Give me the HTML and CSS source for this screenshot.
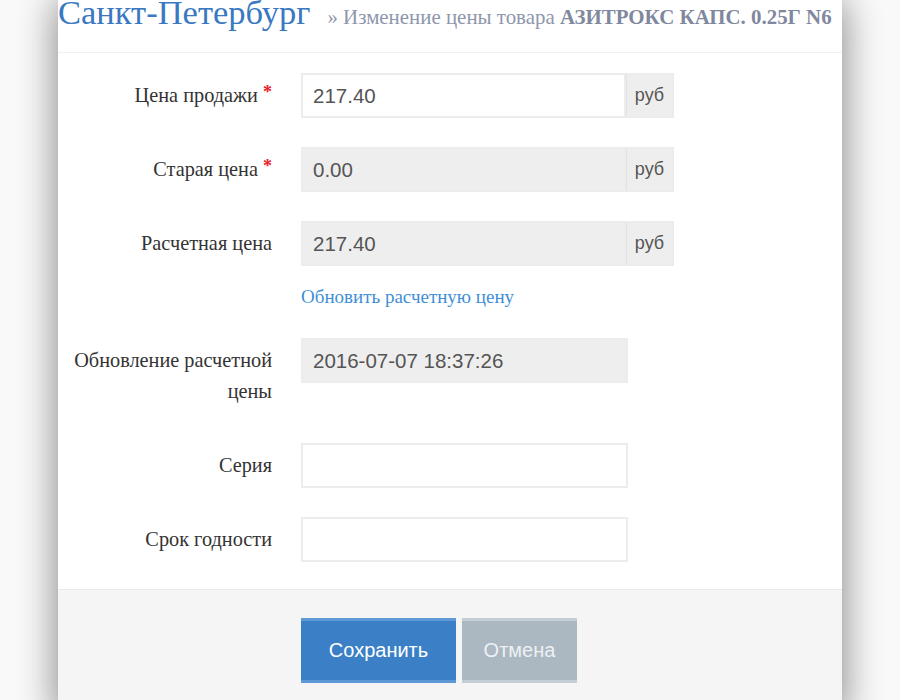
FILE: index.html
```html
<!DOCTYPE html>
<html lang="ru">
<head>
<meta charset="utf-8">
<title>Изменение цены товара</title>
<link rel="stylesheet" href="styles.css">
</head>
<body>
<div class="modal">
  <div class="modal-header">
    <h1 class="title">Санкт-Петербург</h1>
    <span class="subtitle">» Изменение цены товара <b>АЗИТРОКС КАПС. 0.25Г N6</b></span>
  </div>
  <form class="modal-body">
    <div class="row">
      <label class="label">Цена продажи <span class="req">*</span></label>
      <div class="group">
        <div class="input">217.40</div>
        <div class="addon">руб</div>
      </div>
    </div>
    <div class="row">
      <label class="label">Старая цена <span class="req">*</span></label>
      <div class="group">
        <div class="input disabled">0.00</div>
        <div class="addon">руб</div>
      </div>
    </div>
    <div class="row row-link">
      <label class="label">Расчетная цена</label>
      <div class="field">
        <div class="group">
          <div class="input disabled">217.40</div>
          <div class="addon">руб</div>
        </div>
        <a class="link" href="#">Обновить расчетную цену</a>
      </div>
    </div>
    <div class="row">
      <label class="label">Обновление расчетной цены</label>
      <div class="input short disabled">2016-07-07 18:37:26</div>
    </div>
    <div class="row">
      <label class="label">Серия</label>
      <div class="input short"></div>
    </div>
    <div class="row last">
      <label class="label">Срок годности</label>
      <div class="input short"></div>
    </div>
  </form>
  <div class="modal-footer">
    <button class="btn btn-primary" type="button">Сохранить</button>
    <button class="btn btn-cancel" type="button">Отмена</button>
  </div>
</div>
</body>
</html>
```

FILE: styles.css
```css
html, body {
  margin: 0;
  padding: 0;
  height: 100%;
  overflow: hidden;
  background: #fafafa;
}

.modal {
  margin-left: 58px;
  width: 784px;
  height: 720px;
  background: #ffffff;
  box-shadow: 0 0 38px rgba(0, 0, 0, 0.5);
  overflow: hidden;
}

.modal-header {
  height: 52px;
  border-bottom: 1px solid #f0f0f0;
  display: flex;
  align-items: baseline;
  gap: 17px;
}

.title {
  margin: 0;
  font-family: "Liberation Serif", "DejaVu Serif", serif;
  font-weight: normal;
  font-size: 34.5px;
  line-height: 24px;
  color: #3a79c2;
}

.subtitle {
  font-family: "Liberation Serif", "DejaVu Serif", serif;
  font-size: 20.9px;
  line-height: 24px;
  color: #8e96ab;
  white-space: nowrap;
}

.subtitle b {
  color: #7f889e;
}

.modal-body {
  padding: 20px 0 27px 0;
}

.row {
  display: flex;
  align-items: flex-start;
  margin-bottom: 29px;
}

.row.last {
  margin-bottom: 0;
}

.label {
  width: 214px;
  height: auto;
  flex: none;
  text-align: right;
  padding: 7px 0;
  line-height: 31px;
  font-family: "Liberation Serif", "DejaVu Serif", serif;
  font-size: 20.3px;
  color: #333333;
  box-sizing: border-box;
}

.req {
  color: #e8202a;
  font-weight: bold;
  font-size: 18px;
  line-height: 0;
  vertical-align: top;
  position: relative;
  top: 12px;
}

.group, .input.short, .field {
  margin-left: 29px;
}

.field .group {
  margin-left: 0;
}

.group {
  display: flex;
  width: 373px;
  height: 45px;
  box-sizing: border-box;
}

.input {
  flex: 1;
  height: 45px;
  box-sizing: border-box;
  border: 2px solid #ececec;
  background: #ffffff;
  padding: 0 10px;
  font-family: "Liberation Sans", Arial, sans-serif;
  font-size: 20.5px;
  line-height: 41px;
  color: #555555;
}

.input.disabled {
  background: #eeeeee;
}

.input.short {
  flex: none;
  width: 327px;
}

.addon {
  width: 48px;
  flex: none;
  box-sizing: border-box;
  border: 2px solid #ececec;
  border-left: 1px solid #e2e2e2;
  background: #eeeeee;
  text-align: center;
  font-family: "Liberation Sans", Arial, sans-serif;
  font-size: 18px;
  line-height: 41px;
  color: #555555;
}

.link {
  display: block;
  margin-top: 21px;
  margin-bottom: 2px;
  line-height: 20px;
  font-family: "Liberation Serif", "DejaVu Serif", serif;
  font-size: 19px;
  color: #3f8fd8;
  text-decoration: none;
}

.modal-footer {
  border-top: 1px solid #ebebeb;
  background: #f5f5f5;
  padding: 28px 0 40px 243px;
  display: flex;
  gap: 6px;
}

.btn {
  height: 65px;
  border: none;
  margin: 0;
  padding: 0;
  font-family: "Liberation Sans", Arial, sans-serif;
  font-size: 20px;
  color: #ffffff;
  cursor: pointer;
}

.btn-primary {
  width: 155px;
  background: #3b7fc7;
  border-top: 3px solid #5f98d6;
  border-bottom: 3px solid #5f98d6;
}

.btn-cancel {
  width: 115px;
  background: #abb7c1;
  color: #eef1f3;
  border-top: 3px solid #c5ced5;
  border-bottom: 3px solid #c5ced5;
}
```
